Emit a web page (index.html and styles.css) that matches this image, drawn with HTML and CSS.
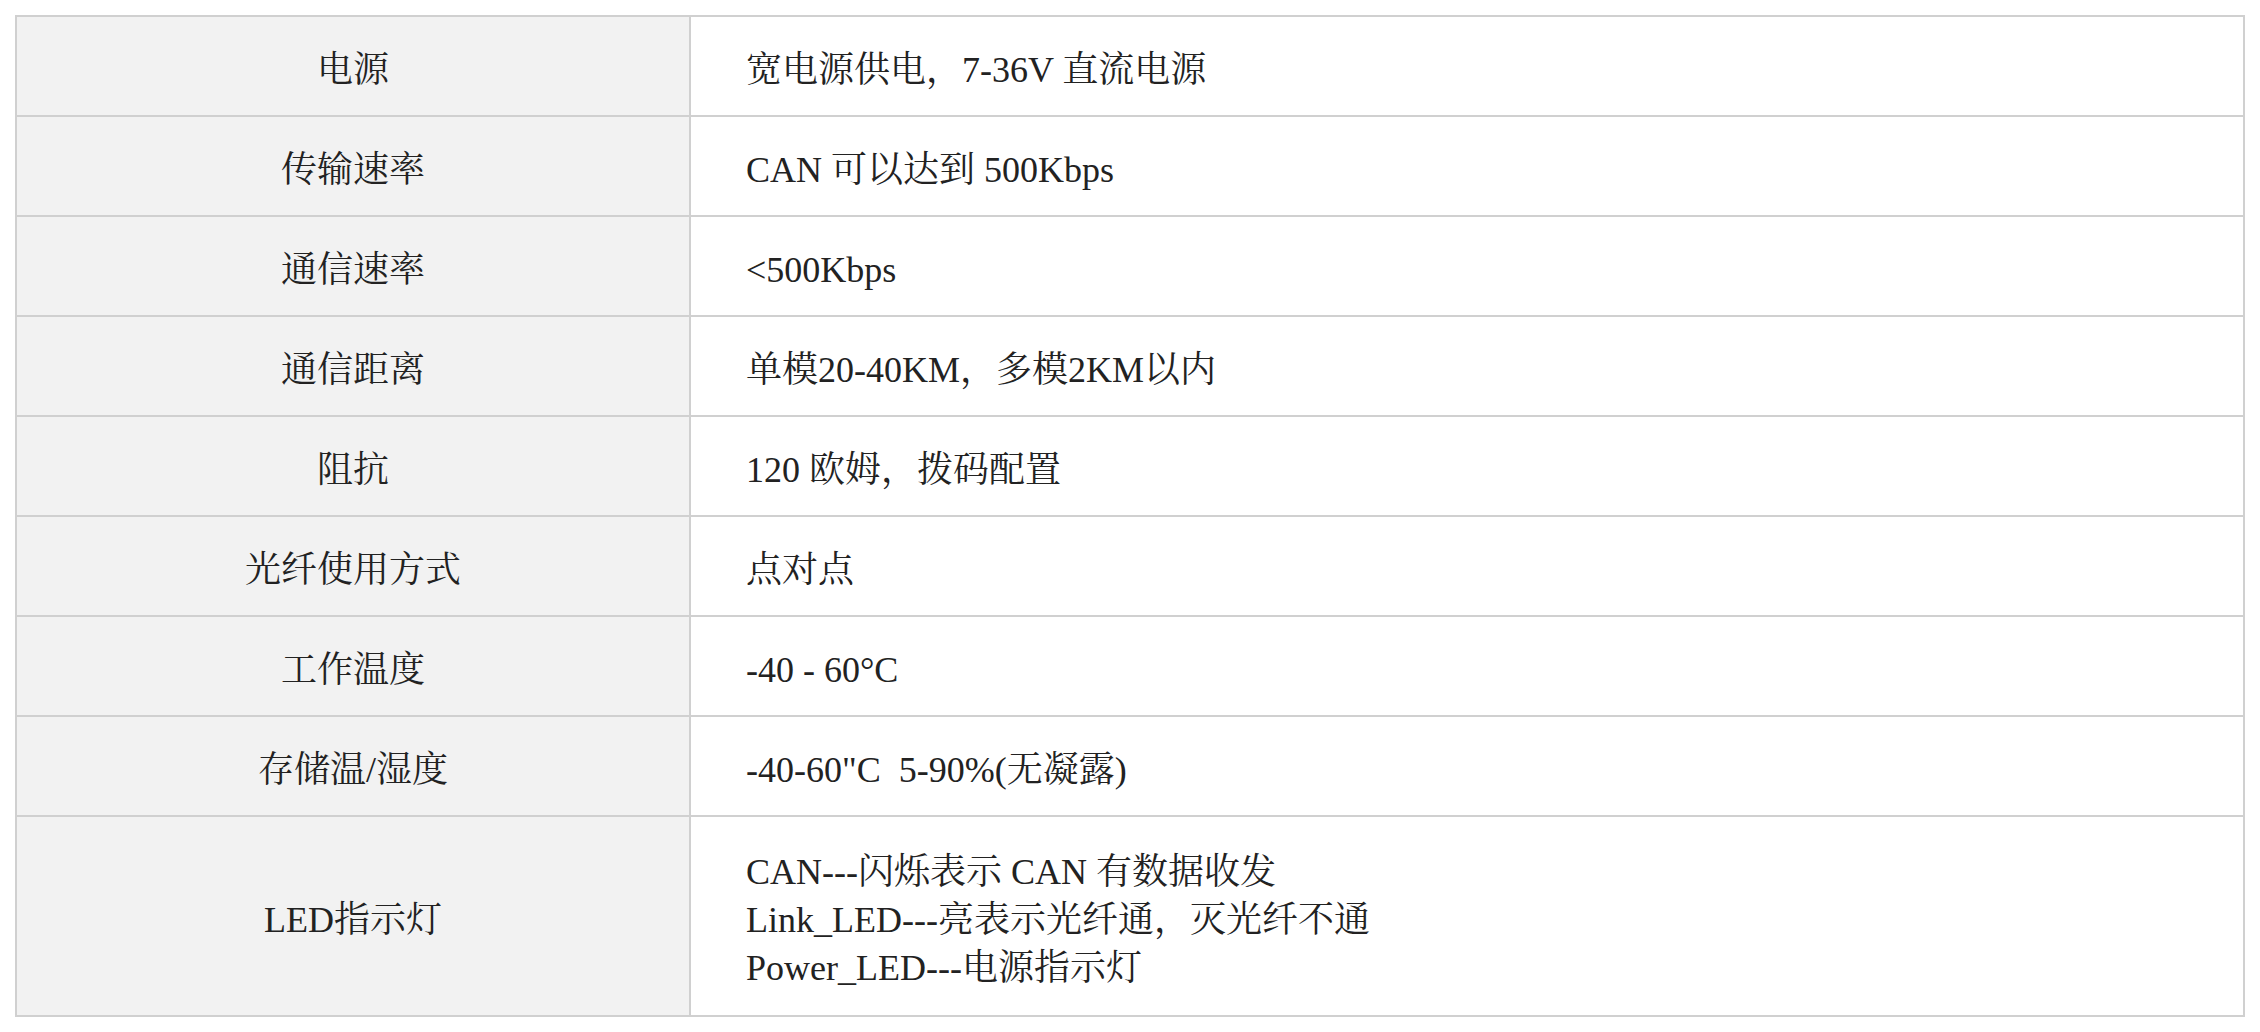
FILE: index.html
```html
<!DOCTYPE html>
<html lang="zh-CN">
<head>
<meta charset="utf-8">
<title>参数</title>
<link rel="stylesheet" href="styles.css">
</head>
<body>
<div class="spec">
  <div class="cell label">电源</div>
  <div class="cell value">宽电源供电，7-36V 直流电源</div>
  <div class="cell label">传输速率</div>
  <div class="cell value">CAN 可以达到 500Kbps</div>
  <div class="cell label">通信速率</div>
  <div class="cell value">&lt;500Kbps</div>
  <div class="cell label">通信距离</div>
  <div class="cell value">单模20-40KM，多模2KM以内</div>
  <div class="cell label">阻抗</div>
  <div class="cell value">120 欧姆，拨码配置</div>
  <div class="cell label">光纤使用方式</div>
  <div class="cell value">点对点</div>
  <div class="cell label">工作温度</div>
  <div class="cell value">-40 - 60°C</div>
  <div class="cell label">存储温/湿度</div>
  <div class="cell value">-40-60"C&nbsp; 5-90%(无凝露)</div>
  <div class="cell label tall">LED指示灯</div>
  <div class="cell value tall">
    <div class="lines">
      <div>CAN---闪烁表示 CAN 有数据收发</div>
      <div>Link_LED---亮表示光纤通，灭光纤不通</div>
      <div>Power_LED---电源指示灯</div>
    </div>
  </div>
</div>
</body>
</html>
```

FILE: styles.css
```css
html, body {
  background: #ffffff;
}
body {
  margin: 15px;
  font-family: "Liberation Serif", "Noto Serif CJK SC", "Noto Sans CJK SC", serif;
  font-size: 36px;
  color: #222222;
}
.spec {
  display: grid;
  grid-template-columns: 674px 1fr;
  width: 2230px;
  box-sizing: border-box;
  border-top: 2px solid #d0d0d0;
  border-left: 2px solid #d0d0d0;
}
.cell {
  box-sizing: border-box;
  height: 100px;
  padding-top: 7px;
  display: flex;
  align-items: center;
  border-right: 2px solid #d0d0d0;
  border-bottom: 2px solid #d0d0d0;
  line-height: 48px;
  white-space: nowrap;
}
.label {
  background: #f2f2f2;
  justify-content: center;
}
.value {
  background: #ffffff;
  padding-left: 55px;
}
.tall {
  height: 200px;
}
.lines {
  display: flex;
  flex-direction: column;
}
```
